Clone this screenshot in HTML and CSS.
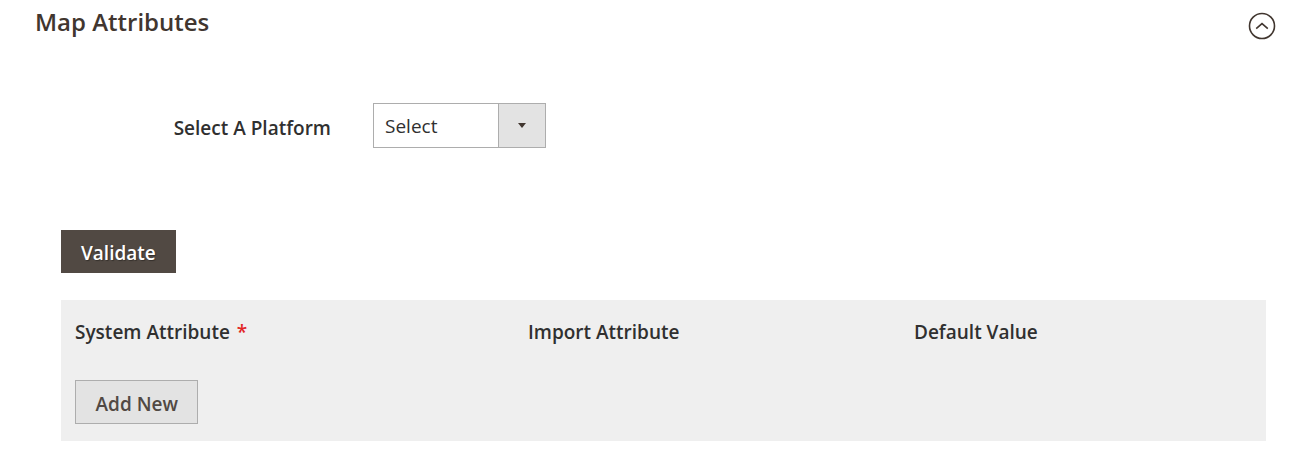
FILE: index.html
```html
<!DOCTYPE html>
<html lang="en">
<head>
<meta charset="utf-8">
<title>Map Attributes</title>
<link rel="stylesheet" href="styles.css">
</head>
<body>
<section class="section">
  <header class="section-head">
    <h2 class="section-title">Map Attributes</h2>
    <button class="collapse-btn" type="button" aria-label="Collapse">
      <svg width="28" height="28" viewBox="0 0 28 28">
        <circle cx="14" cy="14" r="12.5" fill="none" stroke="#41362f" stroke-width="1.6"/>
        <path d="M8.2 16.6 L14 11.6 L19.8 16.6" fill="none" stroke="#41362f" stroke-width="1.6"/>
      </svg>
    </button>
  </header>

  <div class="field-row">
    <label class="field-label">Select A Platform</label>
    <div class="select">
      <span class="select-value">Select</span>
      <span class="select-arrow"><span class="tri"></span></span>
    </div>
  </div>

  <div class="actions">
    <button class="btn-primary" type="button">Validate</button>
  </div>

  <div class="panel">
    <div class="panel-head">
      <div class="col">System Attribute <span class="req">*</span></div>
      <div class="col">Import Attribute</div>
      <div class="col">Default Value</div>
    </div>
    <button class="btn-secondary" type="button">Add New</button>
  </div>
</section>
</body>
</html>
```

FILE: styles.css
```css
html, body {
  margin: 0;
  padding: 0;
  background: #ffffff;
}

body {
  font-family: "Open Sans", "Noto Sans", sans-serif;
  color: #303030;
}

.section {
  padding: 5px 34px 0 35px;
}

.section-head {
  display: flex;
  justify-content: space-between;
  align-items: flex-start;
}

.section-title {
  margin: 0;
  font-size: 24px;
  line-height: 34px;
  font-weight: 600;
  color: #41362f;
}

.collapse-btn {
  margin-top: 7px;
  padding: 0;
  border: 0;
  background: none;
  width: 28px;
  height: 28px;
  display: block;
}

.collapse-btn svg {
  display: block;
}

.field-row {
  display: flex;
  align-items: center;
  margin-top: 63px;
}

.field-label {
  width: 338px;
  padding: 5px 42px 0 0;
  box-sizing: border-box;
  text-align: right;
  font-size: 19px;
  font-weight: 600;
  color: #303030;
}

.select {
  display: flex;
  width: 173px;
  height: 45px;
  box-sizing: border-box;
  border: 1px solid #adadad;
  background: #ffffff;
}

.select-value {
  flex: 1;
  padding: 2px 0 0 11px;
  font-size: 19px;
  line-height: 41px;
  color: #303030;
}

.select-arrow {
  width: 46px;
  border-left: 1px solid #adadad;
  background: #e3e3e3;
  display: flex;
  align-items: center;
  justify-content: center;
}

.tri {
  width: 0;
  height: 0;
  border-left: 4.5px solid transparent;
  border-right: 4.5px solid transparent;
  border-top: 5.5px solid #41362f;
  margin-top: -1px;
}

.actions {
  margin-top: 82px;
  padding-left: 26px;
}

.btn-primary {
  height: 43px;
  padding: 3px 19px 0;
  border: 1px solid #514943;
  background: #514943;
  color: #ffffff;
  font-family: "Open Sans", "Noto Sans", sans-serif;
  font-size: 19px;
  font-weight: 600;
  text-shadow: 1px 1px 1px rgba(0, 0, 0, 0.35);
  cursor: pointer;
}

.panel {
  margin: 27px 10px 0 26px;
  background: #efefef;
  padding: 19px 14px 17px;
}

.panel-head {
  display: grid;
  grid-template-columns: 453px 386px 1fr;
  font-size: 19px;
  line-height: 26px;
  font-weight: 600;
  color: #303030;
}

.req {
  color: #e22626;
  margin-left: 2px;
}

.btn-secondary {
  display: block;
  margin-top: 35px;
  height: 44px;
  padding: 3px 19.5px 0;
  border: 1px solid #adadad;
  background: #e3e3e3;
  color: #514943;
  font-family: "Open Sans", "Noto Sans", sans-serif;
  font-size: 19px;
  font-weight: 600;
  cursor: pointer;
}
```
